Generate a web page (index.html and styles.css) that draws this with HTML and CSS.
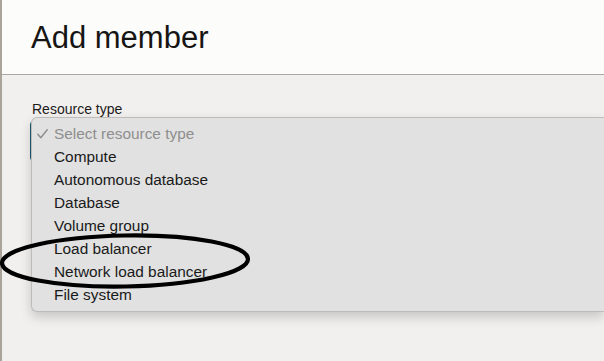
FILE: index.html
```html
<!DOCTYPE html>
<html lang="en">

<head>
    <meta charset="UTF-8">
    <meta name="viewport" content="width=device-width, initial-scale=1.0">
    <title>Add member</title>

    <link rel="stylesheet" href="styles.css">
</head>

<body>
    <div id="header">
        <h1 id="heading">Add member</h1>
    </div>

    <div id="content">
        <div class="label">Resource type</div>

        <div class="field">
            <!-- open select popup -->
            <ul class="menu">
                <li class="item disabled">
                    <svg class="check" width="11" height="10" viewBox="0 0 11 10">
                        <polyline points="0.8,5.2 3.8,8.8 10.2,0.8" fill="none" stroke="#8d8d8d" stroke-width="1.4" stroke-linecap="round" stroke-linejoin="round" />
                    </svg>Select resource type
                </li>
                <li class="item">Compute</li>
                <li class="item">Autonomous database</li>
                <li class="item">Database</li>
                <li class="item">Volume group</li>
                <li class="item">Load balancer</li>
                <li class="item">Network load balancer</li>
                <li class="item">File system</li>
            </ul>
        </div>
    </div>

    <!-- hand drawn marker -->
    <svg class="circle" width="262" height="66" viewBox="0 0 262 66">
        <ellipse cx="126" cy="32" rx="123" ry="25.5" fill="none" stroke="#000" stroke-width="4.2" transform="rotate(-1 126 32)" />
    </svg>
</body>

</html>
```

FILE: styles.css
```css
body {
    margin: 0;
    height: 361px;
    overflow: hidden;
    border-left: 2px solid #aaa39c;
    background-color: #f1f0ee;
    font-family: "Liberation Sans", Arial, sans-serif;
    color: #1b1a19;
}

#header {
    height: 74px;
    padding-left: 29px;
    background-color: #fcfcfa;
    border-bottom: 1px solid #aba7a2;
}

#heading {
    margin: 0;
    padding-top: 21px;
    font-size: 31px;
    font-weight: normal;
    line-height: 34px;
    color: #161513;
}

#content {
    padding: 26px 0 0 28px;
}

.label {
    padding-left: 2px;
    font-size: 14px;
    line-height: 16px;
}

.field {
    position: relative;
    height: 40px;
    margin-top: 4px;
    border-left: 2px solid #1d5b73;
    border-radius: 4px;
}

.menu {
    position: absolute;
    top: -4px;
    left: -1px;
    right: 0;
    margin: 0;
    padding: 4px 0 5px 0;
    list-style: none;
    background-color: #e1e1e1;
    border: 1px solid #bdbcbb;
    border-right: none;
    border-radius: 6px 0 0 6px;
    box-shadow: 0 5px 12px rgba(0, 0, 0, 0.18);
}

.item {
    height: 23px;
    padding-left: 22px;
    font-size: 15.4px;
    line-height: 23px;
    color: #1a1a1a;
}

.disabled {
    position: relative;
    color: #8e8e8e;
}

.check {
    position: absolute;
    left: 5px;
    top: 7px;
}

.circle {
    position: absolute;
    left: -1px;
    top: 229px;
}
```
